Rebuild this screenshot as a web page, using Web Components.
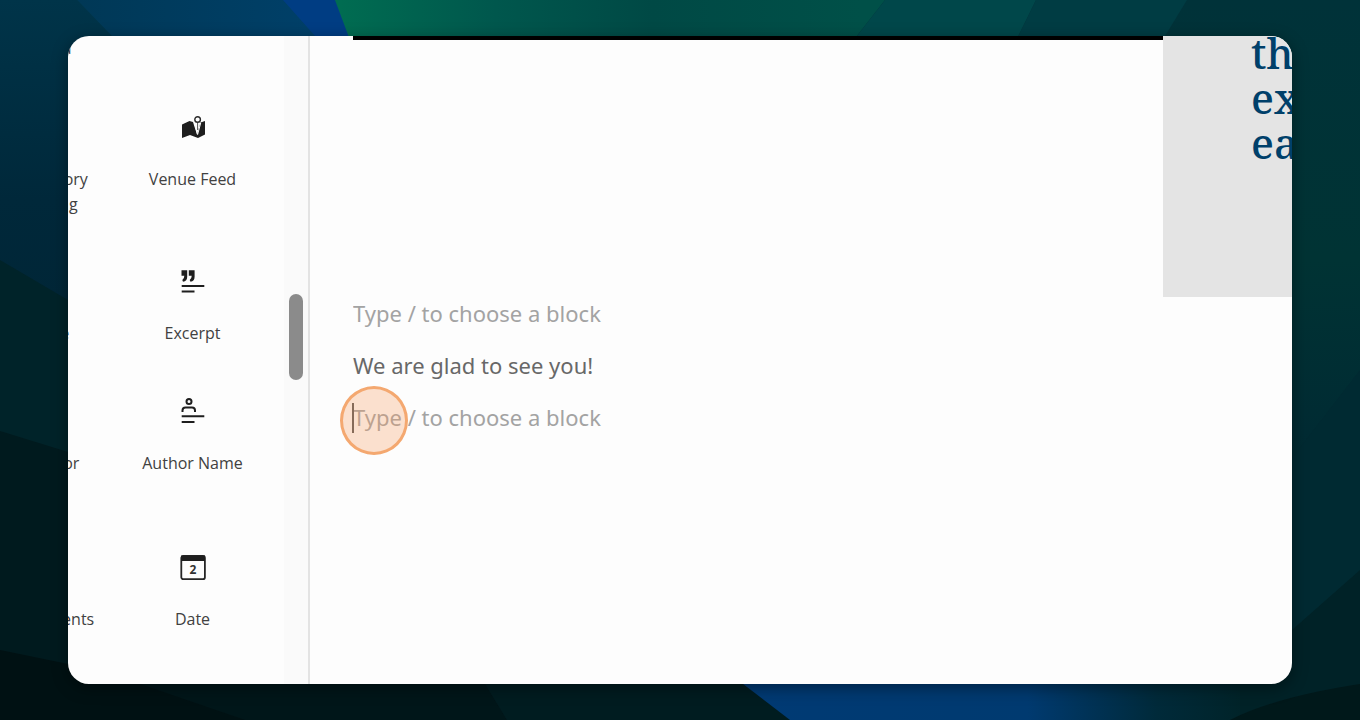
<!DOCTYPE html>
<html lang="en">
<head>
<meta charset="utf-8">
<meta name="viewport" content="width=device-width, initial-scale=1">
<title>Page editor</title>
<style>
html, body { margin: 0; min-height: 100%; background: #002127; }
body { font-family: "Noto Sans", "Open Sans", sans-serif; }
</style>
</head>
<body>
<editor-stage>
  <editor-window>
    <block-library slot="sidebar">
      <block-tile label="Feed"></block-tile>
      <block-tile></block-tile>
      <block-tile label="Directory&#10;Listing"></block-tile>
      <block-tile label="Venue Feed" icon="venue"></block-tile>
      <block-tile label="Title"></block-tile>
      <block-tile label="Excerpt" icon="excerpt"></block-tile>
      <block-tile label="Author"></block-tile>
      <block-tile label="Author Name" icon="author"></block-tile>
      <block-tile label="Comments&#10;List"></block-tile>
      <block-tile label="Date" icon="date"></block-tile>
    </block-library>
    <editor-canvas>
      <hero-strip slot="hero">th<br>ex<br>ea</hero-strip>
      <block-input></block-input>
      <p>We are glad to see you!</p>
      <block-input active></block-input>
    </editor-canvas>
  </editor-window>
</editor-stage>

<script>
const define = (name, html, setup) => customElements.define(name, class extends HTMLElement {
  connectedCallback() {
    if (this.shadowRoot) return;
    const root = this.attachShadow({ mode: 'open' });
    const template = document.createElement('template');
    template.innerHTML = html;
    root.append(template.content.cloneNode(true));
    if (setup) setup(this, root);
  }
});

// Wallpaper of overlapping dark facets, with the window laid over it.
define('editor-stage', `
<style>
:host { display: block; position: relative; box-sizing: border-box; min-height: 100vh; padding: 36px 5%; overflow: hidden; }
svg { position: absolute; inset: 0; width: 100%; height: 100%; }
</style>
<svg viewBox="0 0 1360 720" preserveAspectRatio="none" aria-hidden="true">
  <defs>
    <linearGradient id="l" x1="0" y1="0" x2="0" y2="1"><stop offset="0" stop-color="#003449"/><stop offset=".5" stop-color="#00283a"/><stop offset="1" stop-color="#002434"/></linearGradient>
    <linearGradient id="t" gradientUnits="userSpaceOnUse" x1="77" y1="0" x2="320" y2="0"><stop offset="0" stop-color="#003856"/><stop offset="1" stop-color="#004069"/></linearGradient>
    <linearGradient id="g" gradientUnits="userSpaceOnUse" x1="340" y1="0" x2="860" y2="0"><stop offset="0" stop-color="#006c51"/><stop offset=".3" stop-color="#00574d"/><stop offset=".6" stop-color="#004945"/><stop offset="1" stop-color="#005048"/></linearGradient>
    <linearGradient id="r" x1="0" y1="0" x2="0" y2="1"><stop offset="0" stop-color="#003239"/><stop offset=".36" stop-color="#003334"/><stop offset=".6" stop-color="#002b33"/><stop offset="1" stop-color="#002226"/></linearGradient>
    <linearGradient id="b" gradientUnits="userSpaceOnUse" x1="743" y1="0" x2="1260" y2="0"><stop offset="0" stop-color="#003a74"/><stop offset=".55" stop-color="#003a70"/><stop offset=".8" stop-color="#002a3a"/><stop offset="1" stop-color="#002225"/></linearGradient>
  </defs>
  <rect width="1360" height="720" fill="url(#r)"/>
  <path fill="url(#l)" d="M0 0H77L400 330V400H0z"/>
  <path fill="url(#t)" d="M77 0H340V100H174z"/>
  <path fill="#003d83" d="M283 0H340L380 100H372z"/>
  <path fill="url(#g)" d="M335 0H885L810 96H371z"/>
  <path fill="#00474a" d="M885 0H1036L987 100H807z"/>
  <path fill="#003c43" d="M1036 0H1187L1126 100H987z"/>
  <path fill="#002329" d="M0 260L68 300L240 400V500H0z"/>
  <path fill="#001a1e" d="M0 431L68 452L300 520L790 720H0z"/>
  <path fill="#001619" d="M80 664H473L507 720H80z"/>
  <path fill="#001113" d="M0 650L68 664L140 684L245 720H0z"/>
  <path fill="#002a32" d="M1360 370L1292 458L1240 510V720H1360z"/>
  <path fill="#002227" d="M1360 570L1292 630L1230 680V720H1360z"/>
  <path fill="url(#b)" d="M700 664H1240V720H762z"/>
  <path fill="#001c20" d="M473 664H717L790 720H507z"/>
  <path fill="#00181a" d="M1230 720Q1275 697 1360 684V720z"/>
</svg>
<slot></slot>`);

define('editor-window', `
<style>
:host { display: flex; position: relative; min-height: calc(100vh - 72px); border-radius: 21px; overflow: hidden; background: #fdfdfd; box-shadow: 0 4px 16px rgba(0, 0, 0, .4); }
main { flex: 1; min-width: 0; }
</style>
<slot name="sidebar"></slot><main><slot></slot></main>`);

// Two-column block list that is scrolled sideways past its left edge, and its scroll bar.
define('block-library', `
<style>
:host { display: flex; flex: none; width: 240px; border-right: 2px solid #e3e3e3; overflow: hidden; }
.grid { flex: 1; min-width: 0; display: grid; grid-template-columns: 139px 139px; grid-template-rows: 25px 103px 79px 105px 104px; row-gap: 51px; justify-content: end; align-content: start; padding-right: 22px; overflow: hidden; }
.track { flex: none; display: flex; flex-direction: column; align-items: center; width: 24px; background: #fafafa; }
.track::before { content: ""; flex: 258; }
.thumb { flex: 86; width: 14px; border-radius: 7px; background: #8b8b8b; }
.track::after { content: ""; flex: 304; }
</style>
<div class="grid"><slot></slot></div>
<div class="track"><div class="thumb"></div></div>`);

const icons = {
  venue: '<path fill="#1e1e1e" d="M5 12.500L12.500 9L16 10L20 22.600L23.500 10.500L28 9V22.500L21 26L13 23L5 26z"/><path fill="none" stroke="#fdfdfd" stroke-width="1" d="M17.500 11L20.600 22.500L23.700 11"/><circle cx="20.600" cy="7.500" r="2.800" fill="#fdfdfd" stroke="#2b2b2b" stroke-width="1.400"/><path fill="none" stroke="#555" stroke-width="1" d="M20.600 11V18"/>',
  excerpt: '<path fill="#1e1e1e" d="M4.500 4.300H10.200V10.700Q10.200 15 6 15.700L5.300 14Q7.300 12.800 7.300 9.700H4.500zM11.800 4.300H17.600V10.700Q17.600 15 13.500 15.700L12.700 14Q14.700 12.800 14.700 9.700H11.800z"/><path fill="none" stroke="#1e1e1e" stroke-width="1.900" d="M4.700 20H27.300M4.700 25.500H17.500"/>',
  author: '<g fill="none" stroke="#1e1e1e" stroke-width="2"><circle cx="12" cy="5.500" r="2.500"/><path d="M5.500 16V14.500Q5.500 11.500 8.500 11.500H15Q18 11.500 18 14.500V16M4.700 20.200H27.300M4.700 26H17.500"/></g>',
  date: '<rect x="4.300" y="4" width="23.600" height="23.200" rx="2" fill="none" stroke="#262626" stroke-width="1.800"/><path fill="#1e1e1e" d="M4 3.500H28V9H4z"/><text x="16" y="22" text-anchor="middle" font-family="Noto Sans, sans-serif" font-size="12" font-weight="700" fill="#333">2</text>'
};

define('block-tile', `
<style>
:host { display: block; }
button { display: flex; flex-direction: column; align-items: center; gap: 23px; width: 100%; margin: 0; padding: 0; border: 0; background: none; color: #414141; font: 16px/25px "Open Sans", "Noto Sans", sans-serif; text-align: center; white-space: pre-line; }
svg, .blank { display: block; width: 32px; height: 32px; }
</style>`, (host, root) => {
  const label = host.getAttribute('label');
  if (!label) return;
  const button = document.createElement('button');
  button.type = 'button';
  const icon = icons[host.getAttribute('icon')];
  const first = label === 'Feed';
  button.innerHTML = (icon ? `<svg viewBox="0 0 32 32" aria-hidden="true">${icon}</svg>` : first ? '' : '<span class="blank"></span>') + `<span>${label}</span>`;
  root.append(button);
});

define('editor-canvas', `
<style>
:host { display: block; }
section { display: flex; flex-direction: column; gap: 20px; padding-left: 43px; }
::slotted(p) { margin: 0; font-size: 22px; line-height: 32px; color: #686868; }
</style>
<slot name="hero"></slot>
<section><slot></slot></section>`);

define('hero-strip', `
<style>
:host { display: flex; align-items: flex-start; padding-left: 43px; }
.rule { flex: 1; height: 4px; background: #000; }
.panel { flex: none; box-sizing: border-box; width: 129px; height: 261px; padding-left: 88px; overflow: hidden; background: #e4e4e4; }
h2 { margin: -6px 0 0; color: #00406a; font: 500 42px/45px "Noto Serif", "DejaVu Serif", serif; white-space: nowrap; }
</style>
<div class="rule"></div><div class="panel"><h2><slot></slot></h2></div>`);

define('block-input', `
<style>
:host { display: block; position: relative; height: 32px; }
input { display: block; width: 100%; height: 32px; box-sizing: border-box; margin: 0; padding: 0; border: 0; outline: 0; background: none; font: 22px/32px "Noto Sans", sans-serif; color: #686868; }
input::placeholder { color: #a3a3a3; opacity: 1; }
.caret, .click { display: none; position: absolute; pointer-events: none; }
:host([active]) .caret { display: block; left: -1px; top: 2px; width: 2px; height: 30px; background: #555; }
:host([active]) .click { display: block; left: -13px; top: -15px; width: 68px; height: 69px; box-sizing: border-box; border: 3px solid #f4a870; border-radius: 50%; background: rgba(248, 160, 100, .3); }
</style>
<input type="text" aria-label="Empty block" placeholder="Type / to choose a block">
<span class="caret"></span><span class="click"></span>`);
</script>
</body>
</html>
